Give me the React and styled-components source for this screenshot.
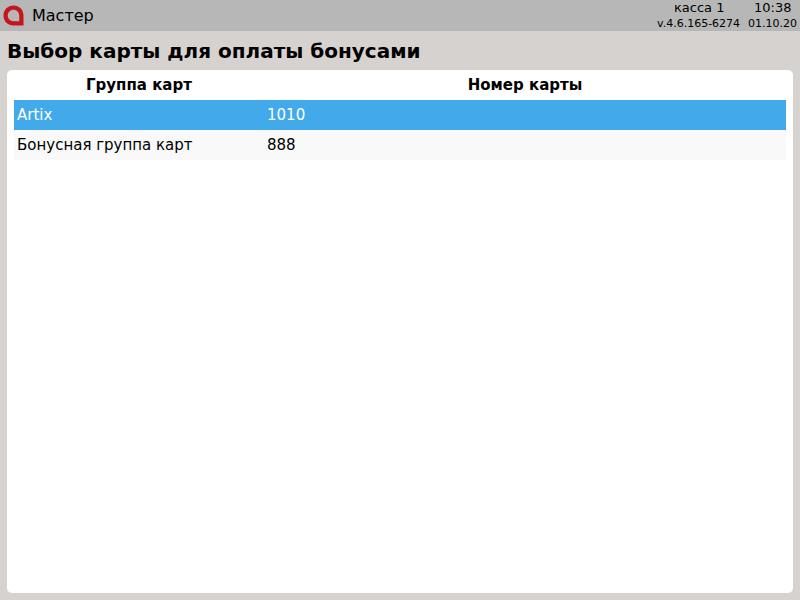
import styled, { createGlobalStyle } from "styled-components";

const GlobalStyle = createGlobalStyle`
  html, body {
    margin: 0;
    padding: 0;
    height: 100%;
    overflow: hidden;
  }
  #root {
    height: 100%;
  }
`;

const rows = [
  { group: "Artix", card: "1010", selected: true },
  { group: "Бонусная группа карт", card: "888" },
];

const Logo = () => (
  <LogoIcon viewBox="0 0 22 22">
    <path
      d="M11 0.5C5 0.5 0.5 5 0.5 11C0.5 17 5 21.5 11 21.5H21.5V11C21.5 5 17 0.5 11 0.5ZM11 5C14.3 5 17 7.7 17 11V17H11C7.7 17 5 14.3 5 11C5 7.7 7.7 5 11 5Z"
      fill="#c5161f"
      fillRule="evenodd"
    />
  </LogoIcon>
);

const App = () => (
  <Page>
    <GlobalStyle />
    <TopBar>
      <Logo />
      <AppName>Мастер</AppName>
      <Info>
        <InfoRow>
          <Cash>касса 1</Cash>
          <Time>10:38</Time>
        </InfoRow>
        <InfoRow>
          <Version>v.4.6.165-6274</Version>
          <DateText>01.10.20</DateText>
        </InfoRow>
      </Info>
    </TopBar>
    <Title>Выбор карты для оплаты бонусами</Title>
    <Card>
      <HeadRow>
        <HeadGroup>Группа карт</HeadGroup>
        <HeadNumber>Номер карты</HeadNumber>
      </HeadRow>
      {rows.map((row) => (
        <Row key={row.card} $selected={row.selected}>
          <GroupCell>{row.group}</GroupCell>
          <NumberCell>{row.card}</NumberCell>
        </Row>
      ))}
    </Card>
  </Page>
);

export default App;

const Page = styled.div`
  height: 600px;
  width: 800px;
  display: flex;
  flex-direction: column;
  background-color: #d6d2cf;
  font-family: "DejaVu Sans", sans-serif;
  color: #000;
`;

const TopBar = styled.header`
  height: 31px;
  flex: none;
  display: flex;
  align-items: center;
  background-color: #b7b7b7;
  padding-left: 3px;
`;

const LogoIcon = styled.svg`
  width: 21px;
  height: 21px;
  flex: none;
`;

const AppName = styled.span`
  font-size: 16px;
  margin-left: 8px;
`;

const Info = styled.div`
  margin-left: auto;
  display: flex;
  flex-direction: column;
  height: 31px;
  width: 143px;
`;

const InfoRow = styled.div`
  display: flex;
  height: 15.5px;
  align-items: center;
  white-space: nowrap;
`;

const Cash = styled.span`
  font-size: 13px;
  margin-left: 17px;
  width: 80px;
`;

const Time = styled.span`
  font-size: 13px;
`;

const Version = styled.span`
  font-size: 11px;
  width: 91px;
`;

const DateText = styled.span`
  font-size: 11px;
`;

const Title = styled.h1`
  margin: 0;
  height: 39px;
  flex: none;
  padding-left: 7px;
  font-size: 20px;
  font-weight: bold;
  line-height: 40px;
`;

const Card = styled.main`
  flex: 1;
  margin: 0 7px 7px;
  padding: 0 7px;
  background-color: #fff;
  border-radius: 5px;
`;

const HeadRow = styled.div`
  display: grid;
  grid-template-columns: 250px 1fr;
  height: 30px;
  align-items: center;
  text-align: center;
  font-size: 15px;
  font-weight: bold;
`;

const HeadGroup = styled.span`
  padding-right: 0;
`;

const HeadNumber = styled.span``;

const Row = styled.div`
  display: grid;
  grid-template-columns: 250px 1fr;
  height: 30px;
  align-items: center;
  font-size: 15px;
  background-color: ${({ $selected }) => ($selected ? "#42aaea" : "#f9f9f9")};
  color: ${({ $selected }) => ($selected ? "#fff" : "#000")};
`;

const GroupCell = styled.span`
  padding-left: 3px;
`;

const NumberCell = styled.span`
  padding-left: 3px;
`;
